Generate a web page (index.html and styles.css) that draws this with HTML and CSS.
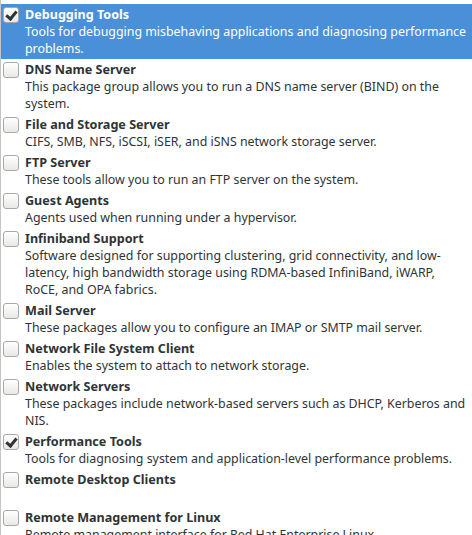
FILE: index.html
```html
<!DOCTYPE html>
<html lang="en">
<head>
    <meta charset="UTF-8">
    <title>Add-Ons for Selected Environment</title>
    <link rel="stylesheet" href="styles.css">
</head>
<body>
    <div class="addon-list">
        <div class="addon selected">
            <span class="check checked"></span>
            <div class="addon-text">
                <div class="addon-name">Debugging Tools</div>
                <div class="addon-desc">Tools for debugging misbehaving applications and diagnosing performance<br>problems.</div>
            </div>
        </div>
        <div class="addon">
            <span class="check"></span>
            <div class="addon-text">
                <div class="addon-name">DNS Name Server</div>
                <div class="addon-desc">This package group allows you to run a DNS name server (BIND) on the<br>system.</div>
            </div>
        </div>
        <div class="addon">
            <span class="check"></span>
            <div class="addon-text">
                <div class="addon-name">File and Storage Server</div>
                <div class="addon-desc">CIFS, SMB, NFS, iSCSI, iSER, and iSNS network storage server.</div>
            </div>
        </div>
        <div class="addon">
            <span class="check"></span>
            <div class="addon-text">
                <div class="addon-name">FTP Server</div>
                <div class="addon-desc">These tools allow you to run an FTP server on the system.</div>
            </div>
        </div>
        <div class="addon">
            <span class="check"></span>
            <div class="addon-text">
                <div class="addon-name">Guest Agents</div>
                <div class="addon-desc">Agents used when running under a hypervisor.</div>
            </div>
        </div>
        <div class="addon">
            <span class="check"></span>
            <div class="addon-text">
                <div class="addon-name">Infiniband Support</div>
                <div class="addon-desc">Software designed for supporting clustering, grid connectivity, and low-<br>latency, high bandwidth storage using RDMA-based InfiniBand, iWARP,<br>RoCE, and OPA fabrics.</div>
            </div>
        </div>
        <div class="addon">
            <span class="check"></span>
            <div class="addon-text">
                <div class="addon-name">Mail Server</div>
                <div class="addon-desc">These packages allow you to configure an IMAP or SMTP mail server.</div>
            </div>
        </div>
        <div class="addon">
            <span class="check"></span>
            <div class="addon-text">
                <div class="addon-name">Network File System Client</div>
                <div class="addon-desc">Enables the system to attach to network storage.</div>
            </div>
        </div>
        <div class="addon">
            <span class="check"></span>
            <div class="addon-text">
                <div class="addon-name">Network Servers</div>
                <div class="addon-desc">These packages include network-based servers such as DHCP, Kerberos and<br>NIS.</div>
            </div>
        </div>
        <div class="addon">
            <span class="check checked"></span>
            <div class="addon-text">
                <div class="addon-name">Performance Tools</div>
                <div class="addon-desc">Tools for diagnosing system and application-level performance problems.</div>
            </div>
        </div>
        <div class="addon">
            <span class="check"></span>
            <div class="addon-text">
                <div class="addon-name">Remote Desktop Clients</div>
                <div class="addon-desc">&nbsp;</div>
            </div>
        </div>
        <div class="addon">
            <span class="check"></span>
            <div class="addon-text">
                <div class="addon-name">Remote Management for Linux</div>
                <div class="addon-desc">Remote management interface for Red Hat Enterprise Linux.</div>
            </div>
        </div>
    </div>
</body>
</html>
```

FILE: styles.css
```css
html, body {
    margin: 0;
    height: 100%;
    overflow: hidden;
    background: #ffffff;
}

body {
    font-family: "Noto Sans", "Open Sans", sans-serif;
    font-size: 12.4px;
    color: #2e3436;
}

.addon-list {
    padding-top: 4px;
    border-left: 1px solid #c4c5c2;
    min-height: 100%;
}

.addon {
    display: flex;
    gap: 6px;
    padding: 2px 0 2px 2px;
    line-height: 17px;
}

.addon.selected {
    background: #4a90d9;
    color: #ffffff;
}

.addon-name {
    font-weight: bold;
    font-size: 12.6px;
}

.addon-desc {
    white-space: nowrap;
}

.check {
    flex: none;
    width: 14px;
    height: 14px;
    margin-top: 1px;
    border: 1px solid #a8a8a6;
    border-radius: 3px;
    background: linear-gradient(180deg, #ffffff 0%, #e8e8e7 100%);
    position: relative;
}

.checked::after {
    content: '';
    position: absolute;
    left: 4px;
    top: 1px;
    width: 4px;
    height: 8px;
    border: solid #2e3436;
    border-width: 0 3px 3px 0;
    transform: rotate(40deg);
}
```
